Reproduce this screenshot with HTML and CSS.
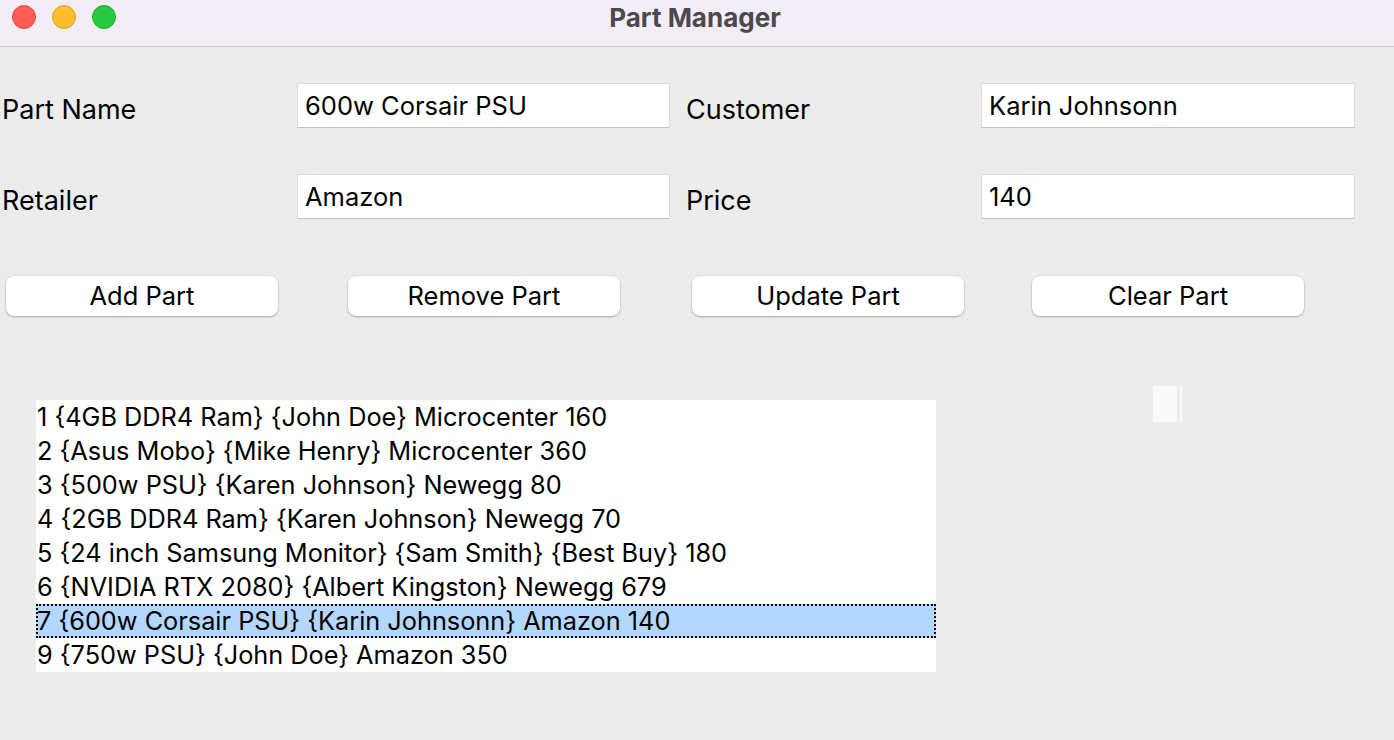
FILE: index.html
```html
<!DOCTYPE html>
<html>
<head>
<meta charset="utf-8">
<link rel="stylesheet" href="styles.css">
</head>
<body>
<div class="window">
  <header class="titlebar">
    <div class="lights">
      <span class="light red"></span>
      <span class="light yellow"></span>
      <span class="light green"></span>
    </div>
    <div class="title">Part Manager</div>
  </header>
  <main class="content">
    <div class="form">
      <label class="label">Part Name</label>
      <div class="entry">600w Corsair PSU</div>
      <label class="label label-right">Customer</label>
      <div class="entry">Karin Johnsonn</div>
      <label class="label">Retailer</label>
      <div class="entry">Amazon</div>
      <label class="label label-right">Price</label>
      <div class="entry">140</div>
    </div>
    <div class="buttons">
      <button class="btn">Add Part</button>
      <button class="btn">Remove Part</button>
      <button class="btn">Update Part</button>
      <button class="btn">Clear Part</button>
    </div>
    <div class="list-row">
      <ul class="listbox">
        <li>1 {4GB DDR4 Ram} {John Doe} Microcenter 160</li>
        <li>2 {Asus Mobo} {Mike Henry} Microcenter 360</li>
        <li>3 {500w PSU} {Karen Johnson} Newegg 80</li>
        <li>4 {2GB DDR4 Ram} {Karen Johnson} Newegg 70</li>
        <li>5 {24 inch Samsung Monitor} {Sam Smith} {Best Buy} 180</li>
        <li>6 {NVIDIA RTX 2080} {Albert Kingston} Newegg 679</li>
        <li class="selected">7 {600w Corsair PSU} {Karin Johnsonn} Amazon 140</li>
        <li>9 {750w PSU} {John Doe} Amazon 350</li>
      </ul>
      <div class="scrollbar"></div>
    </div>
  </main>
</div>
</body>
</html>
```
FILE: styles.css
```css
* { box-sizing: border-box; }
html, body {
  margin: 0;
  padding: 0;
  background: #ececec;
  font-family: "Inter", "Noto Sans", sans-serif;
  color: #000;
}
.window {
  width: 1394px;
  height: 740px;
  overflow: hidden;
  background: #ececec;
}
.titlebar {
  position: relative;
  height: 47px;
  background: #f3eef6;
  border-bottom: 1px solid #cfcdd1;
  display: flex;
  align-items: center;
  justify-content: center;
}
.lights {
  position: absolute;
  left: 12px;
  top: 5px;
  display: flex;
  gap: 16px;
}
.light {
  width: 24px;
  height: 24px;
  border-radius: 50%;
  display: block;
}
.red { background: #ff5f57; border: 1px solid #e2463f; }
.yellow { background: #febc2e; border: 1px solid #e0a028; }
.green { background: #28c840; border: 1px solid #1caa2c; }
.title {
  font-weight: 700;
  font-size: 26px;
  color: #4b484e;
  margin-top: -12px;
  margin-left: -4px;
}
.content {
  padding-top: 36px;
}
.form {
  display: grid;
  grid-template-columns: 294px 373px 311px 374px;
  grid-auto-rows: 45px;
  row-gap: 46px;
  padding-left: 3px;
}
.label {
  font-size: 27px;
  display: flex;
  align-items: center;
  padding-top: 8px;
  margin-left: -1px;
}
.label-right { padding-left: 17px; }
.entry {
  background: #fff;
  border: 1px solid #dcdcdc;
  border-bottom-color: #c4c4c4;
  font-size: 25.5px;
  padding-left: 7px;
  display: flex;
  align-items: center;
  padding-bottom: 0;
}
.buttons {
  display: grid;
  grid-template-columns: 342px 344px 340px 272px;
  padding-left: 6px;
  margin-top: 57px;
}
.btn {
  width: 272px;
  height: 40px;
  background: #fff;
  border: none;
  border-radius: 8px;
  box-shadow: 0 1px 2px rgba(0,0,0,0.28), 0 0 0 0.5px rgba(0,0,0,0.08);
  font-family: "Inter", "Noto Sans", sans-serif;
  font-size: 25.5px;
  color: #000;
  padding: 0 0 2px;
}
.list-row {
  display: flex;
  align-items: flex-start;
  margin-top: 70px;
}
.listbox {
  list-style: none;
  margin: 14px 0 0 36px;
  padding: 0;
  width: 900px;
  height: 272px;
  background: #fff;
}
.listbox li {
  height: 34px;
  line-height: 34px;
  font-size: 25.3px;
  padding-left: 1px;
  white-space: nowrap;
}
.listbox li.selected {
  background: #b3d7ff;
  outline: 2px dotted #000;
  outline-offset: -2px;
}
.scrollbar {
  margin-left: 217px;
  width: 29px;
  height: 36px;
  background: #f9f9f9;
  border-right: 2px solid #f9f9f9;
  box-shadow: inset -3px 0 0 #ececec;
}
```
